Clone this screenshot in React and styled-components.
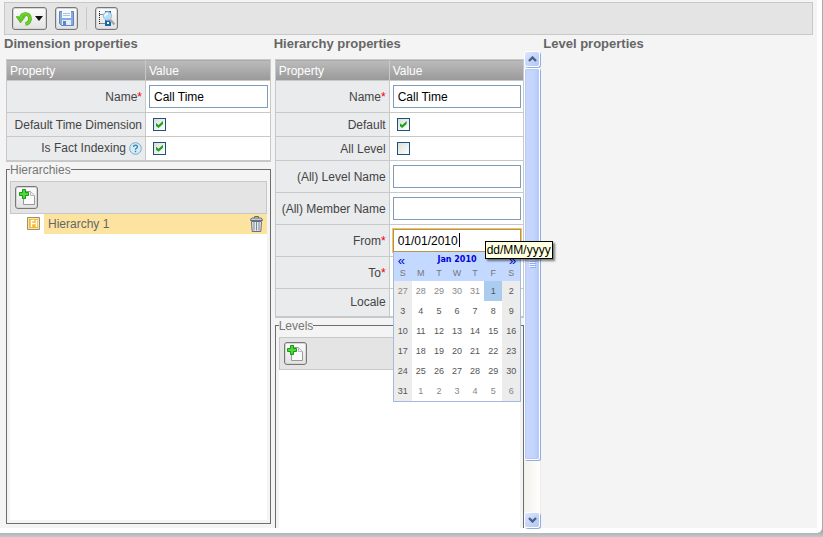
import React from 'react';
import styled, { createGlobalStyle, css } from 'styled-components';

const GlobalStyle = createGlobalStyle`
  *, *::before, *::after { box-sizing: border-box; }
  html, body { margin: 0; height: 100%; }
  body {
    background: #b4b7ba;
    color: #444;
    font: 12px/14px "Liberation Sans", Arial, sans-serif;
    overflow: hidden;
  }
  button, input { font: inherit; margin: 0; }
`;

const Backdrop = styled.div`
  height: 100vh;
  padding: 0 1px 4px 0;
  background: linear-gradient(to top, #c3c8cc 0, #b2b4b6 4px, #a9a9a9 5px);
`;

const Shell = styled.div`
  height: 100%;
  padding: 0 5px 5px 0;
  background: #fff;
  border-bottom-right-radius: 5px;
`;

const Page = styled.main`
  display: flex;
  flex-direction: column;
  height: 100%;
  padding: 2px 4px 0;
  background: #f4f4f4;
`;

const Bar = styled.div`
  display: flex;
  flex: none;
  align-items: center;
  gap: 8px;
  height: 33px;
  padding: 0 ${(p) => (p.$inset ? 4 : 7)}px;
  border: 1px solid #c8c8c8;
  background: #e4e4e4;
`;

const ToolButton = styled.button`
  display: flex;
  align-items: center;
  justify-content: center;
  gap: 3px;
  width: ${(p) => (p.$wide ? 35 : 23)}px;
  height: 23px;
  padding: 0;
  border: 1px solid #777;
  border-radius: 3px;
  background: linear-gradient(#fdfdfd, #e2e2e2);
  box-shadow: inset 0 0 0 1px #d6d6d6;
`;

const Divider = styled.span`
  width: 1px;
  height: 23px;
  background: #c8c8c8;
`;

const Columns = styled.div`
  display: grid;
  grid-template-columns: repeat(3, minmax(0, 1fr));
  flex: 1;
  min-height: 0;
`;

const Column = styled.section`
  display: flex;
  flex-direction: column;
  min-height: 0;
`;

const Title = styled.h2`
  flex: none;
  height: 16px;
  margin: 0;
  font-size: 13px;
  line-height: 18px;
  color: #666;
`;

const PanelBody = styled.div`
  display: flex;
  flex: 1;
  flex-direction: column;
  min-width: 0;
  min-height: 0;
  padding: 8px ${(p) => (p.$cut ? '0 0 1px' : '3px 4px 2px')};
`;

const ScrollRow = styled.div`
  display: flex;
  flex: 1;
  min-height: 0;
  margin-right: 2px;
`;

const Table = styled.table`
  width: 100%;
  flex: none;
  table-layout: fixed;
  border-collapse: collapse;
  border-bottom: 2px solid #c8c8c8;
`;

const HeadCell = styled.th`
  width: ${(p) => (p.$width ? `${p.$width}px` : 'auto')};
  height: 21px;
  padding: 2px 3px 0;
  border: 1px solid #c8c8c8;
  background: linear-gradient(#bcbcbc, #999);
  color: #fff;
  font-weight: normal;
  text-align: left;
`;

const LabelCell = styled.th`
  height: ${(p) => p.$height}px;
  padding: 0 3px 0 0;
  border: 1px solid #c8c8c8;
  background: #eaebed;
  font-weight: normal;
  text-align: right;
  white-space: nowrap;
`;

const ValueCell = styled.td`
  padding: 0 2px 0 3px;
  border: 1px solid #c8c8c8;
  background: #fff;
`;

const Required = styled.span`
  color: #f00000;
`;

const Help = styled.button`
  display: inline-flex;
  margin-left: 3px;
  padding: 0;
  border: 0;
  background: none;
  vertical-align: middle;
`;

const Field = styled.div`
  position: relative;
`;

const TextBox = styled.input`
  display: block;
  width: 100%;
  height: 23px;
  padding: 1px 4px 0;
  border: 1px solid #7f9db9;
  background: #fff;
  color: #000;
  outline: none;
  ${(p) =>
    p.$active &&
    css`
      border-color: #b8934a;
      box-shadow: 0 0 0 1px #f0c36d;
    `}
`;

const Caret = styled.span`
  position: absolute;
  top: 4px;
  left: 66px;
  width: 1px;
  height: 14px;
  background: #000;
`;

const Check = styled.input`
  display: block;
  appearance: none;
  width: 13px;
  height: 13px;
  margin-left: 4px;
  border: 1px solid #1c5180;
  background: linear-gradient(135deg, #dcdcd7, #fff);
  &:checked::before {
    content: '';
    display: block;
    width: 7px;
    height: 7px;
    margin: 2px;
    background: #21a121;
    clip-path: polygon(0 29%, 36% 57%, 100% 0, 100% 43%, 36% 100%, 0 72%);
  }
`;

const Group = styled.fieldset`
  display: flex;
  flex: 1;
  flex-direction: column;
  min-width: 0;
  min-height: 0;
  margin: 1px 0 0;
  padding: 4px 3px ${(p) => (p.$cut ? 0 : 3)}px;
  border: 1px solid #6d6d6d;
  border-bottom-width: ${(p) => (p.$cut ? 0 : 1)}px;
`;

const Legend = styled.legend`
  padding: 0;
  color: #777;
  line-height: 14px;
`;

const Tree = styled.ul`
  flex: 1;
  margin: 0;
  padding: 0;
  background: #fff;
  list-style: none;
`;

const TreeItem = styled.li`
  display: flex;
  align-items: center;
  gap: 4px;
  height: 20px;
  padding-left: 17px;
`;

const TreeLabel = styled.span`
  display: flex;
  flex: 1;
  align-items: center;
  justify-content: space-between;
  height: 20px;
  padding: 1px 4px 0;
  background: #fce3a0;
  color: #666;
`;

const IconButton = styled.button`
  display: flex;
  padding: 0;
  border: 0;
  background: none;
`;

const Scrollbar = styled.div`
  display: flex;
  flex: none;
  flex-direction: column;
  width: 17px;
  border-right: 1px solid #eeede5;
  background: linear-gradient(to right, #f3f1ec, #fefefb);
`;

const ScrollButton = styled.button`
  display: flex;
  flex: none;
  align-items: center;
  justify-content: center;
  height: 16px;
  padding: 0;
  border: 1px solid #fff;
  border-radius: 3px;
  background: linear-gradient(135deg, #dbe6fd, #b0c6f7);
  box-shadow: 1px 1px 0 #8eaee0;
`;

const Track = styled.div`
  display: flex;
  flex: 1;
  flex-direction: column;
`;

const Thumb = styled.div`
  display: flex;
  align-items: center;
  justify-content: center;
  height: 88%;
  margin-top: 1px;
  border: 1px solid #fff;
  border-radius: 2px;
  background: linear-gradient(to right, #c8d6fb, #c5d5fd 60%, #b4c9f9);
  box-shadow: 1px 1px 0 #8eaee0, inset 0 0 0 1px #b7cbf7;
`;

const Calendar = styled.div`
  position: absolute;
  top: 100%;
  left: 0;
  z-index: 2;
  width: 100%;
  border: 1px solid #a2bbdd;
  border-top: 0;
  background: #fff;
  font-size: 9px;
  line-height: 12px;
`;

const MonthBar = styled.div`
  display: flex;
  align-items: center;
  justify-content: space-between;
  height: 16px;
  padding: 0 4px;
  background: #c3d9ff;
  color: #0000dd;
`;

const MonthButton = styled.button`
  height: 14px;
  padding: 2px 0 0;
  border: 0;
  background: none;
  color: inherit;
  font-size: 13px;
  line-height: 12px;
`;

const Month = styled.strong`
  font: bold 8px/12px "DejaVu Sans", sans-serif;
`;

const Days = styled.table`
  width: 100%;
  table-layout: fixed;
  border-collapse: collapse;
`;

const Weekday = styled.th`
  height: 13px;
  padding: 0 0 2px;
  background: #c3d9ff;
  color: #777;
  font-weight: normal;
  line-height: 11px;
`;

const DayCell = styled.td`
  height: 20px;
  padding: 0;
  background: ${(p) => (p.$selected ? '#aaccee' : p.$weekend ? '#ececec' : '#fff')};
`;

const Day = styled.button`
  display: block;
  width: 100%;
  height: 20px;
  padding: 0;
  border: 0;
  background: none;
  color: ${(p) => (p.$outside ? '#888' : '#555')};
  text-align: center;
`;

const Tooltip = styled.div`
  position: absolute;
  top: 12px;
  left: 92px;
  z-index: 3;
  padding: 1px;
  border: 1px solid #000;
  background: #ffffe1;
  box-shadow: 2px 2px 2px rgba(0, 0, 0, 0.5);
  color: #000;
  white-space: nowrap;
`;

const UndoIcon = () => (
  <svg width="16" height="16" viewBox="0 0 16 16" aria-hidden="true">
    <path d="M4.500 8C5.200 4.600 7.300 3 9.500 3c2.700 0 4.500 2 4.500 4.700 0 2.600-1.800 4.800-4.500 5.300" fill="none" stroke="#4da81a" strokeWidth="3.600" />
    <path d="M0 5.500h2.500L3 7l2.500-1.500h4L4.500 12z" fill="#62c922" stroke="#4da81a" strokeWidth=".6" />
    <path d="M4.500 8C5.200 4.600 7.300 3 9.500 3c2.700 0 4.500 2 4.500 4.700 0 2.600-1.800 4.800-4.500 5.300" fill="none" stroke="#6bd326" strokeWidth="2.400" />
  </svg>
);

const DownIcon = () => (
  <svg width="8" height="5" viewBox="0 0 8 5" aria-hidden="true">
    <path d="M0 0h8L4 5z" fill="#111" />
  </svg>
);

const SaveIcon = () => (
  <svg width="17" height="17" viewBox="0 0 17 17" aria-hidden="true">
    <path d="M1.500 1.500h14v14h-12l-2-2z" fill="#86abe0" stroke="#5e86c4" />
    <path d="M4 1h9v7H4z" fill="#f6f9fe" />
    <path d="M5 3.500h7M5 5.500h7" stroke="#b4c2d6" />
    <path d="M4 10h9v5H4z" fill="#e6ecf5" />
    <path d="M5 11h3v4H5z" fill="#5e86c4" />
  </svg>
);

const InspectIcon = () => (
  <svg width="17" height="17" viewBox="0 0 17 17" aria-hidden="true">
    <path d="M1.500 1v13M1.500 4.500h6M1.500 13.500h6" fill="none" stroke="#222" strokeDasharray="1 1" />
    <path d="M8 2h4v4H8zM8 11h4v4H8z" fill="#fff" stroke="#146aa8" strokeWidth="2" />
    <path d="M12 9.500l4.500 5" stroke="#a8a8a8" strokeWidth="2.500" />
    <circle cx="9.500" cy="6" r="4.200" fill="#b9dcf6" stroke="#9dbdd8" />
    <path d="M7 6.500q.3-2.700 3-2.700" fill="none" stroke="#fff" strokeWidth="1.500" />
  </svg>
);

const AddIcon = () => (
  <svg width="18" height="18" viewBox="0 0 18 18" aria-hidden="true">
    <path d="M5.500 3.500h7l4 4v9h-11z" fill="#fbfbfb" stroke="#999" />
    <path d="M12.500 3.500v4h4" fill="#ececec" stroke="#bbb" />
    <path d="M4.500 1.500h3v3h3v3h-3v3h-3v-3h-3v-3h3z" fill="#4fd83c" stroke="#159a16" />
  </svg>
);

const HierarchyIcon = () => (
  <svg width="13" height="13" viewBox="0 0 13 13" aria-hidden="true">
    <path d="M.5.5h12v12H.5z" fill="#f4b92e" stroke="#9a917c" />
    <path d="M1.500 1.500h10v10h-10z" fill="none" stroke="#fbe6a4" />
    <path d="M4.500 3v7M4.500 6.500h4M4.500 3.500h3M9.500 3v7" fill="none" stroke="#fff" strokeWidth="1.500" />
  </svg>
);

const TrashIcon = () => (
  <svg width="13" height="16" viewBox="0 0 13 16" aria-hidden="true">
    <path d="M4.500 2V.5h4V2" fill="none" stroke="#66707c" />
    <path d="M.5 4.500q0-2.500 2-2.500h8q2 0 2 2.500z" fill="#c4ccd4" stroke="#66707c" />
    <path d="M1.500 5.500h10l-.7 10H2.200z" fill="#e6e9ed" stroke="#66707c" />
    <path d="M4 6v8.500M6.500 6v8.500M9 6v8.500" stroke="#7d8791" />
  </svg>
);

const HelpIcon = () => (
  <svg width="13" height="13" viewBox="0 0 13 13" aria-hidden="true">
    <circle cx="6.500" cy="6.500" r="5.800" fill="#d6ebf5" stroke="#77a9c6" />
    <path d="M4.600 5q0-1.900 1.900-1.900T8.400 4.800q0 .9-1 1.500-.9.500-.9 1.500" fill="none" stroke="#2b7faf" strokeWidth="1.300" />
    <path d="M5.800 8.800h1.400v1.400H5.800z" fill="#2b7faf" />
  </svg>
);

const Chevron = ({ down }) => (
  <svg width="9" height="6" viewBox="0 0 9 6" aria-hidden="true">
    <path d={down ? 'M1 1l3.500 3.500L8 1' : 'M1 5l3.500-3.500L8 5'} fill="none" stroke="#4d6185" strokeWidth="2.400" />
  </svg>
);

const Grip = () => (
  <svg width="7" height="8" viewBox="0 0 7 8" aria-hidden="true">
    <path d="M0 .5h6M0 2.500h6M0 4.500h6M0 6.500h6" stroke="#f0f5ff" />
    <path d="M1 1.500h6M1 3.500h6M1 5.500h6M1 7.500h6" stroke="#8cb0f8" />
  </svg>
);

const WEEKDAYS = ['S', 'M', 'T', 'W', 'T', 'F', 'S'];
const CELLS = Array.from({ length: 42 }, (_, i) => {
  const n = i - 4;
  if (n < 1) return { day: n + 31, outside: true };
  if (n > 31) return { day: n - 31, outside: true };
  return { day: n, outside: false };
});

function DatePicker() {
  return (
    <Calendar role="dialog" aria-label="Choose date">
      <MonthBar>
        <MonthButton type="button" aria-label="Previous month">«</MonthButton>
        <Month>Jan 2010</Month>
        <MonthButton type="button" aria-label="Next month">»</MonthButton>
      </MonthBar>
      <Days>
        <thead>
          <tr>{WEEKDAYS.map((d, i) => <Weekday key={i} scope="col">{d}</Weekday>)}</tr>
        </thead>
        <tbody>
          {[0, 1, 2, 3, 4, 5].map((week) => (
            <tr key={week}>
              {CELLS.slice(week * 7, week * 7 + 7).map((c, i) => (
                <DayCell key={i} $weekend={i === 0 || i === 6} $selected={week === 0 && c.day === 1}>
                  <Day type="button" $outside={c.outside}>{c.day}</Day>
                </DayCell>
              ))}
            </tr>
          ))}
        </tbody>
      </Days>
    </Calendar>
  );
}

function Row({ id, label, required, help, height = 32, children }) {
  return (
    <tr>
      <LabelCell scope="row" $height={height}>
        <label htmlFor={id}>
          {label}
          {required && <Required>*</Required>}
        </label>
        {help && <Help type="button" aria-label="Help"><HelpIcon /></Help>}
      </LabelCell>
      <ValueCell>{children}</ValueCell>
    </tr>
  );
}

function PropertyTable({ labelWidth, children }) {
  return (
    <Table>
      <thead>
        <tr>
          <HeadCell scope="col" $width={labelWidth}>Property</HeadCell>
          <HeadCell scope="col">Value</HeadCell>
        </tr>
      </thead>
      <tbody>{children}</tbody>
    </Table>
  );
}

export default function App() {
  return (
    <Backdrop>
      <GlobalStyle />
      <Shell>
        <Page>
          <Bar role="toolbar">
            <ToolButton type="button" $wide aria-label="Undo"><UndoIcon /><DownIcon /></ToolButton>
            <ToolButton type="button" aria-label="Save"><SaveIcon /></ToolButton>
            <Divider />
            <ToolButton type="button" aria-label="Inspect"><InspectIcon /></ToolButton>
          </Bar>
          <Columns>
            <Column>
              <Title>Dimension properties</Title>
              <PanelBody>
                <PropertyTable labelWidth={139}>
                  <Row id="dim-name" label="Name" required>
                    <TextBox id="dim-name" defaultValue="Call Time" />
                  </Row>
                  <Row id="dim-time" label="Default Time Dimension" height={24}>
                    <Check id="dim-time" type="checkbox" defaultChecked />
                  </Row>
                  <Row id="dim-fact" label="Is Fact Indexing" help height={24}>
                    <Check id="dim-fact" type="checkbox" defaultChecked />
                  </Row>
                </PropertyTable>
                <Group>
                  <Legend>Hierarchies</Legend>
                  <Bar $inset>
                    <ToolButton type="button" aria-label="Add hierarchy"><AddIcon /></ToolButton>
                  </Bar>
                  <Tree>
                    <TreeItem>
                      <HierarchyIcon />
                      <TreeLabel>
                        Hierarchy 1
                        <IconButton type="button" aria-label="Delete"><TrashIcon /></IconButton>
                      </TreeLabel>
                    </TreeItem>
                  </Tree>
                </Group>
              </PanelBody>
            </Column>
            <Column>
              <Title>Hierarchy properties</Title>
              <ScrollRow>
                <PanelBody $cut>
                  <PropertyTable labelWidth={114}>
                    <Row id="h-name" label="Name" required>
                      <TextBox id="h-name" defaultValue="Call Time" />
                    </Row>
                    <Row id="h-default" label="Default" height={24}>
                      <Check id="h-default" type="checkbox" defaultChecked />
                    </Row>
                    <Row id="h-all" label="All Level" height={24}>
                      <Check id="h-all" type="checkbox" />
                    </Row>
                    <Row id="h-level" label="(All) Level Name">
                      <TextBox id="h-level" />
                    </Row>
                    <Row id="h-member" label="(All) Member Name">
                      <TextBox id="h-member" />
                    </Row>
                    <Row id="h-from" label="From" required>
                      <Field>
                        <TextBox id="h-from" defaultValue="01/01/2010" $active />
                        <Caret />
                        <DatePicker />
                        <Tooltip role="tooltip">dd/MM/yyyy</Tooltip>
                      </Field>
                    </Row>
                    <Row id="h-to" label="To" required>
                      <TextBox id="h-to" />
                    </Row>
                    <Row id="h-locale" label="Locale" height={28}>
                      <TextBox id="h-locale" />
                    </Row>
                  </PropertyTable>
                  <Group $cut>
                    <Legend>Levels</Legend>
                    <Bar $inset>
                      <ToolButton type="button" aria-label="Add level"><AddIcon /></ToolButton>
                    </Bar>
                    <Tree />
                  </Group>
                </PanelBody>
                <Scrollbar>
                  <ScrollButton type="button" aria-label="Scroll up"><Chevron /></ScrollButton>
                  <Track><Thumb><Grip /></Thumb></Track>
                  <ScrollButton type="button" aria-label="Scroll down"><Chevron down /></ScrollButton>
                </Scrollbar>
              </ScrollRow>
            </Column>
            <Column>
              <Title>Level properties</Title>
            </Column>
          </Columns>
        </Page>
      </Shell>
    </Backdrop>
  );
}
